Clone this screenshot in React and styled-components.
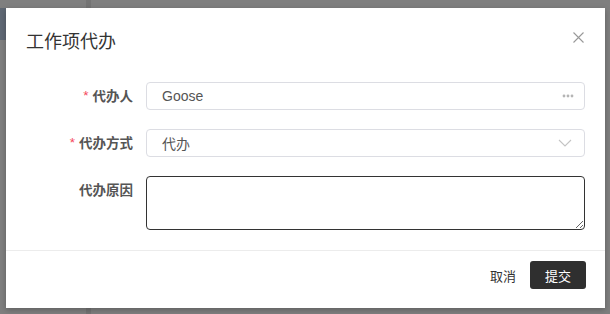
import React from "react";
import styled, { createGlobalStyle } from "styled-components";

const Global = createGlobalStyle`
  html, body { margin: 0; padding: 0; background: #7f7f7f; }
  body { font-family: "Noto Sans CJK SC", "Noto Sans", sans-serif; }
  * { box-sizing: border-box; }
`;

const Backdrop = styled.div`
  position: relative;
  width: 610px;
  height: 314px;
  background: #7f7f7f;
  padding: 8px 0 0 6px;
  overflow: hidden;
`;

const BehindStrip = styled.div`
  position: absolute;
  left: 0;
  top: 8px;
  width: 6px;
  height: 32px;
  background: #5f6874;
`;

const BehindColumn = styled.div`
  position: absolute;
  left: 86px;
  top: 0;
  width: 5px;
  height: 314px;
  background: #747474;
`;

const Modal = styled.div`
  position: relative;
  width: 599px;
  height: 300px;
  background: #fff;
  box-shadow: 0 2px 6px rgba(0, 0, 0, 0.25);
  display: flex;
  flex-direction: column;
`;

const Header = styled.div`
  display: flex;
  align-items: center;
  justify-content: space-between;
  padding: 0 21px 0 20px;
  height: 64px;
  flex: none;
`;

const Title = styled.div`
  font-size: 18px;
  line-height: 24px;
  color: #333;
`;

const Close = styled.button`
  border: 0;
  background: none;
  padding: 0;
  width: 11px;
  height: 11px;
  display: flex;
  margin-top: -6px;
  cursor: pointer;
`;

const Body = styled.div`
  padding: 10px 20px 20px 20px;
  display: flex;
  flex-direction: column;
  gap: 19px;
  border-bottom: 1px solid #ececec;
  flex: none;
`;

const Row = styled.div`
  display: grid;
  grid-template-columns: 107px 1fr;
  column-gap: 13px;
  align-items: start;
`;

const Label = styled.label`
  display: flex;
  align-items: center;
  justify-content: flex-end;
  height: 28px;
  font-size: 13.5px;
  font-weight: 700;
  color: #555;
  line-height: 1;
  white-space: nowrap;
`;

const Star = styled.span`
  color: #f5455c;
  font-weight: 400;
  margin-right: 4px;
  font-family: "Liberation Sans", sans-serif;
  line-height: 1;
`;

const Field = styled.div`
  height: 28px;
  border: 1px solid #dcdde3;
  border-radius: 4px;
  display: flex;
  align-items: center;
  justify-content: space-between;
  padding: 0 10px 0 15px;
  font-size: 14px;
  line-height: 1;
  color: #555;
`;

const FieldText = styled.span`
  font-family: ${(p) => (p.$latin ? '"Liberation Sans", sans-serif' : '"Noto Sans CJK SC", sans-serif')};
`;

const TextArea = styled.textarea`
  display: block;
  width: 100%;
  height: 54px;
  margin: 0;
  vertical-align: top;
  border: 1px solid #333;
  border-radius: 4px;
  outline: none;
  resize: vertical;
  font-family: inherit;
  font-size: 14px;
  padding: 4px 10px;
`;

const Footer = styled.div`
  flex: 1;
  display: flex;
  align-items: flex-start;
  justify-content: flex-end;
  gap: 14px;
  padding: 10px 19px 0 0;
`;

const TextButton = styled.button`
  border: 0;
  background: none;
  height: 28px;
  padding: 0;
  font-family: inherit;
  font-size: 13px;
  color: #333;
`;

const Primary = styled.button`
  border: 0;
  height: 28px;
  width: 56px;
  border-radius: 3px;
  background: #2f2f2f;
  color: #fff;
  font-family: inherit;
  font-size: 13px;
`;

export default function App() {
  return (
    <>
      <Global />
      <Backdrop>
        <BehindColumn />
        <BehindStrip />
        <Modal>
          <Header>
            <Title>工作项代办</Title>
            <Close aria-label="close">
              <svg width="11" height="11" viewBox="0 0 11 11">
                <path d="M0.5 0.5L10.5 10.5M10.5 0.5L0.5 10.5" stroke="#999" strokeWidth="1.1" />
              </svg>
            </Close>
          </Header>
          <Body>
            <Row>
              <Label><Star>*</Star>代办人</Label>
              <Field>
                <FieldText $latin>Goose</FieldText>
                <svg width="12" height="4" viewBox="0 0 12 4">
                  <circle cx="2" cy="2" r="1.4" fill="#b5b5b5" />
                  <circle cx="6" cy="2" r="1.4" fill="#b5b5b5" />
                  <circle cx="10" cy="2" r="1.4" fill="#b5b5b5" />
                </svg>
              </Field>
            </Row>
            <Row>
              <Label><Star>*</Star>代办方式</Label>
              <Field>
                <FieldText>代办</FieldText>
                <svg width="14" height="8" viewBox="0 0 14 8" style={{ marginRight: 2 }}>
                  <path d="M1 1L7 7L13 1" stroke="#c4c4c4" strokeWidth="1.1" fill="none" />
                </svg>
              </Field>
            </Row>
            <Row>
              <Label>代办原因</Label>
              <TextArea />
            </Row>
          </Body>
          <Footer>
            <TextButton>取消</TextButton>
            <Primary>提交</Primary>
          </Footer>
        </Modal>
      </Backdrop>
    </>
  );
}
